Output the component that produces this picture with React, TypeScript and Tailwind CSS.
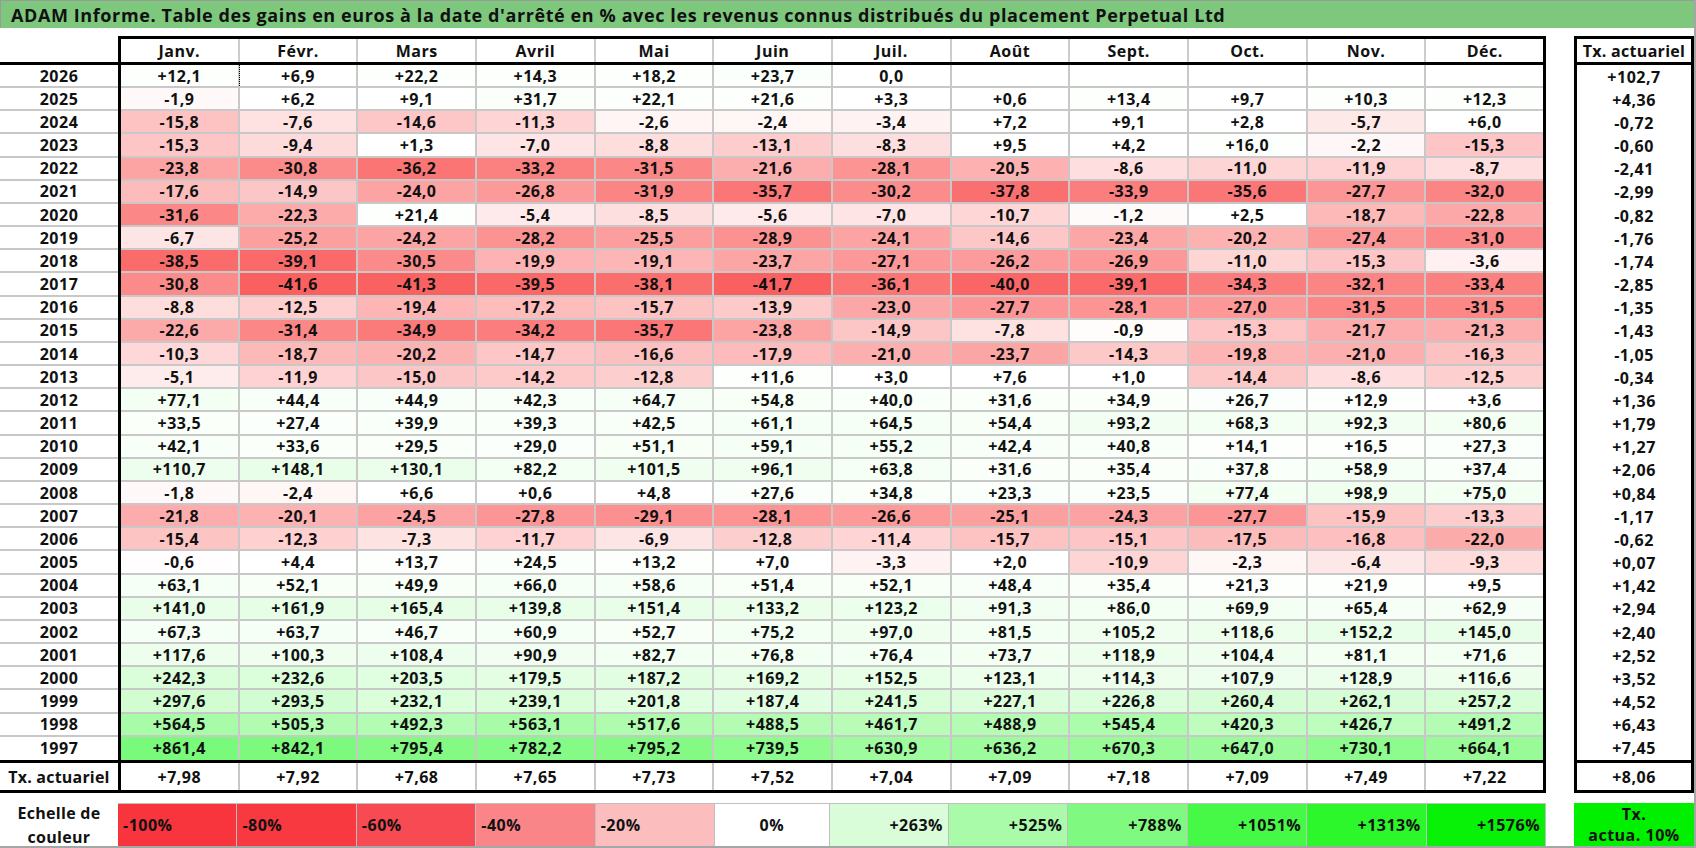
import React from 'react';

const MONTHS = ['Janv.', 'Févr.', 'Mars', 'Avril', 'Mai', 'Juin', 'Juil.', 'Août', 'Sept.', 'Oct.', 'Nov.', 'Déc.'];

const DATA: [string, string, string][] = [
  ['2026', '+12,1|+6,9|+22,2|+14,3|+18,2|+23,7|0,0|||||', '+102,7'],
  ['2025', '-1,9|+6,2|+9,1|+31,7|+22,1|+21,6|+3,3|+0,6|+13,4|+9,7|+10,3|+12,3', '+4,36'],
  ['2024', '-15,8|-7,6|-14,6|-11,3|-2,6|-2,4|-3,4|+7,2|+9,1|+2,8|-5,7|+6,0', '-0,72'],
  ['2023', '-15,3|-9,4|+1,3|-7,0|-8,8|-13,1|-8,3|+9,5|+4,2|+16,0|-2,2|-15,3', '-0,60'],
  ['2022', '-23,8|-30,8|-36,2|-33,2|-31,5|-21,6|-28,1|-20,5|-8,6|-11,0|-11,9|-8,7', '-2,41'],
  ['2021', '-17,6|-14,9|-24,0|-26,8|-31,9|-35,7|-30,2|-37,8|-33,9|-35,6|-27,7|-32,0', '-2,99'],
  ['2020', '-31,6|-22,3|+21,4|-5,4|-8,5|-5,6|-7,0|-10,7|-1,2|+2,5|-18,7|-22,8', '-0,82'],
  ['2019', '-6,7|-25,2|-24,2|-28,2|-25,5|-28,9|-24,1|-14,6|-23,4|-20,2|-27,4|-31,0', '-1,76'],
  ['2018', '-38,5|-39,1|-30,5|-19,9|-19,1|-23,7|-27,1|-26,2|-26,9|-11,0|-15,3|-3,6', '-1,74'],
  ['2017', '-30,8|-41,6|-41,3|-39,5|-38,1|-41,7|-36,1|-40,0|-39,1|-34,3|-32,1|-33,4', '-2,85'],
  ['2016', '-8,8|-12,5|-19,4|-17,2|-15,7|-13,9|-23,0|-27,7|-28,1|-27,0|-31,5|-31,5', '-1,35'],
  ['2015', '-22,6|-31,4|-34,9|-34,2|-35,7|-23,8|-14,9|-7,8|-0,9|-15,3|-21,7|-21,3', '-1,43'],
  ['2014', '-10,3|-18,7|-20,2|-14,7|-16,6|-17,9|-21,0|-23,7|-14,3|-19,8|-21,0|-16,3', '-1,05'],
  ['2013', '-5,1|-11,9|-15,0|-14,2|-12,8|+11,6|+3,0|+7,6|+1,0|-14,4|-8,6|-12,5', '-0,34'],
  ['2012', '+77,1|+44,4|+44,9|+42,3|+64,7|+54,8|+40,0|+31,6|+34,9|+26,7|+12,9|+3,6', '+1,36'],
  ['2011', '+33,5|+27,4|+39,9|+39,3|+42,5|+61,1|+64,5|+54,4|+93,2|+68,3|+92,3|+80,6', '+1,79'],
  ['2010', '+42,1|+33,6|+29,5|+29,0|+51,1|+59,1|+55,2|+42,4|+40,8|+14,1|+16,5|+27,3', '+1,27'],
  ['2009', '+110,7|+148,1|+130,1|+82,2|+101,5|+96,1|+63,8|+31,6|+35,4|+37,8|+58,9|+37,4', '+2,06'],
  ['2008', '-1,8|-2,4|+6,6|+0,6|+4,8|+27,6|+34,8|+23,3|+23,5|+77,4|+98,9|+75,0', '+0,84'],
  ['2007', '-21,8|-20,1|-24,5|-27,8|-29,1|-28,1|-26,6|-25,1|-24,3|-27,7|-15,9|-13,3', '-1,17'],
  ['2006', '-15,4|-12,3|-7,3|-11,7|-6,9|-12,8|-11,4|-15,7|-15,1|-17,5|-16,8|-22,0', '-0,62'],
  ['2005', '-0,6|+4,4|+13,7|+24,5|+13,2|+7,0|-3,3|+2,0|-10,9|-2,3|-6,4|-9,3', '+0,07'],
  ['2004', '+63,1|+52,1|+49,9|+66,0|+58,6|+51,4|+52,1|+48,4|+35,4|+21,3|+21,9|+9,5', '+1,42'],
  ['2003', '+141,0|+161,9|+165,4|+139,8|+151,4|+133,2|+123,2|+91,3|+86,0|+69,9|+65,4|+62,9', '+2,94'],
  ['2002', '+67,3|+63,7|+46,7|+60,9|+52,7|+75,2|+97,0|+81,5|+105,2|+118,6|+152,2|+145,0', '+2,40'],
  ['2001', '+117,6|+100,3|+108,4|+90,9|+82,7|+76,8|+76,4|+73,7|+118,9|+104,4|+81,1|+71,6', '+2,52'],
  ['2000', '+242,3|+232,6|+203,5|+179,5|+187,2|+169,2|+152,5|+123,1|+114,3|+107,9|+128,9|+116,6', '+3,52'],
  ['1999', '+297,6|+293,5|+232,1|+239,1|+201,8|+187,4|+241,5|+227,1|+226,8|+260,4|+262,1|+257,2', '+4,52'],
  ['1998', '+564,5|+505,3|+492,3|+563,1|+517,6|+488,5|+461,7|+488,9|+545,4|+420,3|+426,7|+491,2', '+6,43'],
  ['1997', '+861,4|+842,1|+795,4|+782,2|+795,2|+739,5|+630,9|+636,2|+670,3|+647,0|+730,1|+664,1', '+7,45'],
];

const TX_ROW = ['+7,98', '+7,92', '+7,68', '+7,65', '+7,73', '+7,52', '+7,04', '+7,09', '+7,18', '+7,09', '+7,49', '+7,22'];

const LEGEND: { label: string; bg: string; align: 'left' | 'center' | 'right' }[] = [
  { label: '-100%', bg: '#f8353d', align: 'left' },
  { label: '-80%', bg: '#f8393f', align: 'left' },
  { label: '-60%', bg: '#f84a52', align: 'left' },
  { label: '-40%', bg: '#fa8589', align: 'left' },
  { label: '-20%', bg: '#fbbdbe', align: 'left' },
  { label: '0%', bg: '#ffffff', align: 'center' },
  { label: '+263%', bg: '#d9fcd9', align: 'right' },
  { label: '+525%', bg: '#a9fba9', align: 'right' },
  { label: '+788%', bg: '#7ff97f', align: 'right' },
  { label: '+1051%', bg: '#47f947', align: 'right' },
  { label: '+1313%', bg: '#2bf72b', align: 'right' },
  { label: '+1576%', bg: '#08f208', align: 'right' },
];

function cellBg(s: string): string {
  if (!s) return '#ffffff';
  const v = parseFloat(s.replace(',', '.'));
  let r = 255;
  let g = 255;
  let b = 255;
  if (v < 0) {
    const t = Math.min(1, -v / 41.7);
    r = 255 - t * (255 - 250);
    g = 255 - t * (255 - 96);
    b = 255 - t * (255 - 96);
  } else if (v > 0) {
    const t = Math.min(1, v / 861.4);
    r = 255 - t * (255 - 122);
    g = 255 - t * (255 - 250);
    b = 255 - t * (255 - 122);
  }
  return `rgb(${Math.round(r)},${Math.round(g)},${Math.round(b)})`;
}

export default function App() {
  return (
    <div className="w-[1696px] h-[848px] bg-white overflow-hidden border-r-2 border-b-2 border-[#a6a6a6] text-[#111111] font-['Open_Sans','Liberation_Sans',sans-serif] font-bold text-[16px] tracking-[0.5px] leading-none">
      {/* Title */}
      <div className="h-[28px] bg-[#7ec87e] border-t border-l border-[#9a9a9a] flex items-center pl-[10px] text-[18px] tracking-[0.6px]">
        ADAM Informe. Table des gains en euros à la date d'arrêté en % avec les revenus connus distribués du placement Perpetual Ltd
      </div>
      <div className="h-[8px]" />

      <div className="flex">
        {/* Left block */}
        <div className="w-[1546px] flex flex-col">
          {/* Header */}
          <div className="flex h-[26px]">
            <div className="w-[118px]" />
            <div className="flex-1 flex border-t-[3px] border-x-[3px] border-black">
              {MONTHS.map((m, i) => (
                <div
                  key={m}
                  className={i < 11 ? 'flex-1 flex items-center justify-center border-r-2 border-[#cccccc]' : 'flex-1 flex items-center justify-center'}
                >
                  {m}
                </div>
              ))}
            </div>
          </div>
          <div className="h-[3px] bg-black" />

          {/* Rows */}
          <div className="h-[695px] grid grid-rows-[repeat(30,minmax(0,1fr))]">
            {DATA.map(([year, vals], ri) => {
              const cells = vals.split('|');
              const last = ri === DATA.length - 1;
              return (
                <div key={year} className="flex min-h-0">
                  <div className={last ? 'w-[118px] flex items-center justify-center' : 'w-[118px] flex items-center justify-center border-b-2 border-[#c8c8c8]'}>
                    {year}
                  </div>
                  <div className="w-[3px] bg-black" />
                  <div className="flex-1 flex">
                    {cells.map((c, ci) => {
                      const br = ci < 11;
                      let cls = 'relative flex-1 flex items-center justify-center border-[#c8c8c8]';
                      if (br) cls += ' border-r-2';
                      if (!last) cls += ' border-b-2';
                      return (
                        <div key={ci} className={cls} style={{ backgroundColor: cellBg(c) }}>
                          {c}
                          {ri === 0 && ci === 0 ? (
                            <div className="absolute right-[-2px] top-0 bottom-0 border-r border-dotted border-black" />
                          ) : null}
                        </div>
                      );
                    })}
                  </div>
                  <div className="w-[3px] bg-black" />
                </div>
              );
            })}
          </div>
          <div className="h-[3px] bg-black" />

          {/* Tx actuariel row */}
          <div className="flex h-[27px]">
            <div className="w-[118px] flex items-center justify-center tracking-[0.2px]">Tx. actuariel</div>
            <div className="w-[3px] bg-black" />
            <div className="flex-1 flex">
              {TX_ROW.map((c, ci) => (
                <div
                  key={ci}
                  className={ci < 11 ? 'flex-1 flex items-center justify-center border-r-2 border-[#c8c8c8]' : 'flex-1 flex items-center justify-center'}
                >
                  {c}
                </div>
              ))}
            </div>
            <div className="w-[3px] bg-black" />
          </div>
          <div className="h-[3px] bg-black" />

          <div className="h-[10px]" />

          {/* Legend */}
          <div className="flex h-[43px]">
            <div className="w-[118px] flex flex-col items-center justify-center leading-[24px] tracking-[0.3px]">
              <span>Echelle de</span>
              <span>couleur</span>
            </div>
            <div className="flex-1 flex border-t border-[#c0c0c0]">
              {LEGEND.map((l) => (
                <div
                  key={l.label}
                  className={
                    l.align === 'left'
                      ? 'flex-1 flex items-center justify-start pl-[5px] border-r border-[#c0c0c0]'
                      : l.align === 'center'
                      ? 'flex-1 flex items-center justify-center border-r border-[#c0c0c0]'
                      : 'flex-1 flex items-center justify-end pr-[5px] border-r border-[#c0c0c0]'
                  }
                  style={{ backgroundColor: l.bg }}
                >
                  {l.label}
                </div>
              ))}
            </div>
          </div>
        </div>

        <div className="w-[28px]" />

        {/* Right block */}
        <div className="w-[120px] flex flex-col">
          <div className="h-[757px] border-[3px] border-black flex flex-col">
            <div className="h-[23px] flex items-center justify-center tracking-[0.3px]">Tx. actuariel</div>
            <div className="h-[3px] bg-black" />
            <div className="h-[695px] grid grid-rows-[repeat(30,minmax(0,1fr))]">
              {DATA.map(([year, , tx]) => (
                <div key={year} className="flex items-center justify-center">
                  {tx}
                </div>
              ))}
            </div>
            <div className="h-[3px] bg-black" />
            <div className="h-[27px] flex items-center justify-center">+8,06</div>
          </div>
          <div className="h-[10px]" />
          <div className="h-[43px] bg-[#00f000] flex flex-col items-center justify-center leading-[21px]">
            <span>Tx.</span>
            <span>actua. 10%</span>
          </div>
        </div>
      </div>
    </div>
  );
}
